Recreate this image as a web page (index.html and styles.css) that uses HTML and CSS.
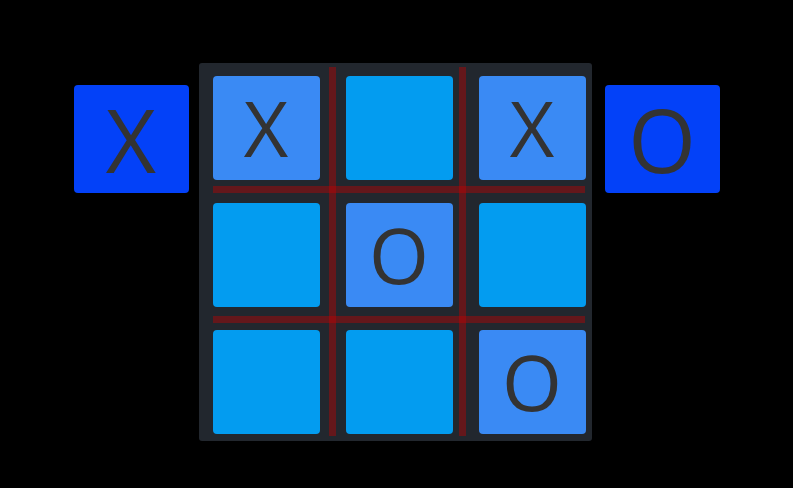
FILE: index.html
```html
<!DOCTYPE html>
<html lang="en">
<head>
    <meta charset="UTF-8">
    <meta name="viewport" content="width=device-width, initial-scale=1.0">
    <title>Tic Tac Toe</title>
    <link rel="stylesheet" href="styles.css">
</head>
<body>
    <div class="game">
        <div class="player player-x">X</div>
        <div class="board">
            <div class="cell taken">X</div>
            <div class="cell"></div>
            <div class="cell taken">X</div>
            <div class="cell"></div>
            <div class="cell taken">O</div>
            <div class="cell"></div>
            <div class="cell"></div>
            <div class="cell"></div>
            <div class="cell taken">O</div>
            <!-- grid lines -->
            <div class="line line-v line-v1"></div>
            <div class="line line-v line-v2"></div>
            <div class="line line-h line-h1"></div>
            <div class="line line-h line-h2"></div>
        </div>
        <div class="player player-o">O</div>
    </div>
</body>
</html>
```

FILE: styles.css
```css
body {
    margin: 0;
    padding: 0;
    background-color: #000;
    font-family: "Open Sans", "Noto Sans", sans-serif;
    height: 100vh;
}

.game {
    display: flex;
    justify-content: center;
    align-items: flex-start;
    padding-top: 63px;
}

.player {
    width: 115px;
    height: 108px;
    margin-top: 22px;
    background-color: #0341f8;
    border-radius: 4px;
    color: #333;
    font-size: 87px;
    line-height: 108px;
    text-align: center;
}

.player-x {
    margin-right: 10px;
}

.player-o {
    margin-left: 13px;
}

.board {
    position: relative;
    display: grid;
    grid-template-columns: repeat(3, 107px);
    grid-template-rows: repeat(3, 104px);
    column-gap: 26px;
    row-gap: 23px;
    padding: 13px 6px 7px 14px;
    background-color: #22272e;
    border-radius: 3px;
}

.cell {
    background-color: #039cf0;
    border-radius: 4px;
    color: #333;
    font-size: 77px;
    line-height: 104px;
    text-align: center;
}

.cell.taken {
    background-color: #3a8af4;
}

.line {
    position: absolute;
    background-color: rgba(200, 0, 0, 0.4);
}

.line-v {
    top: 4px;
    width: 7px;
    height: 369px;
}

.line-v1 {
    left: 130px;
}

.line-v2 {
    left: 260px;
}

.line-h {
    left: 14px;
    width: 372px;
    height: 7px;
}

.line-h1 {
    top: 123px;
}

.line-h2 {
    top: 253px;
}
```
